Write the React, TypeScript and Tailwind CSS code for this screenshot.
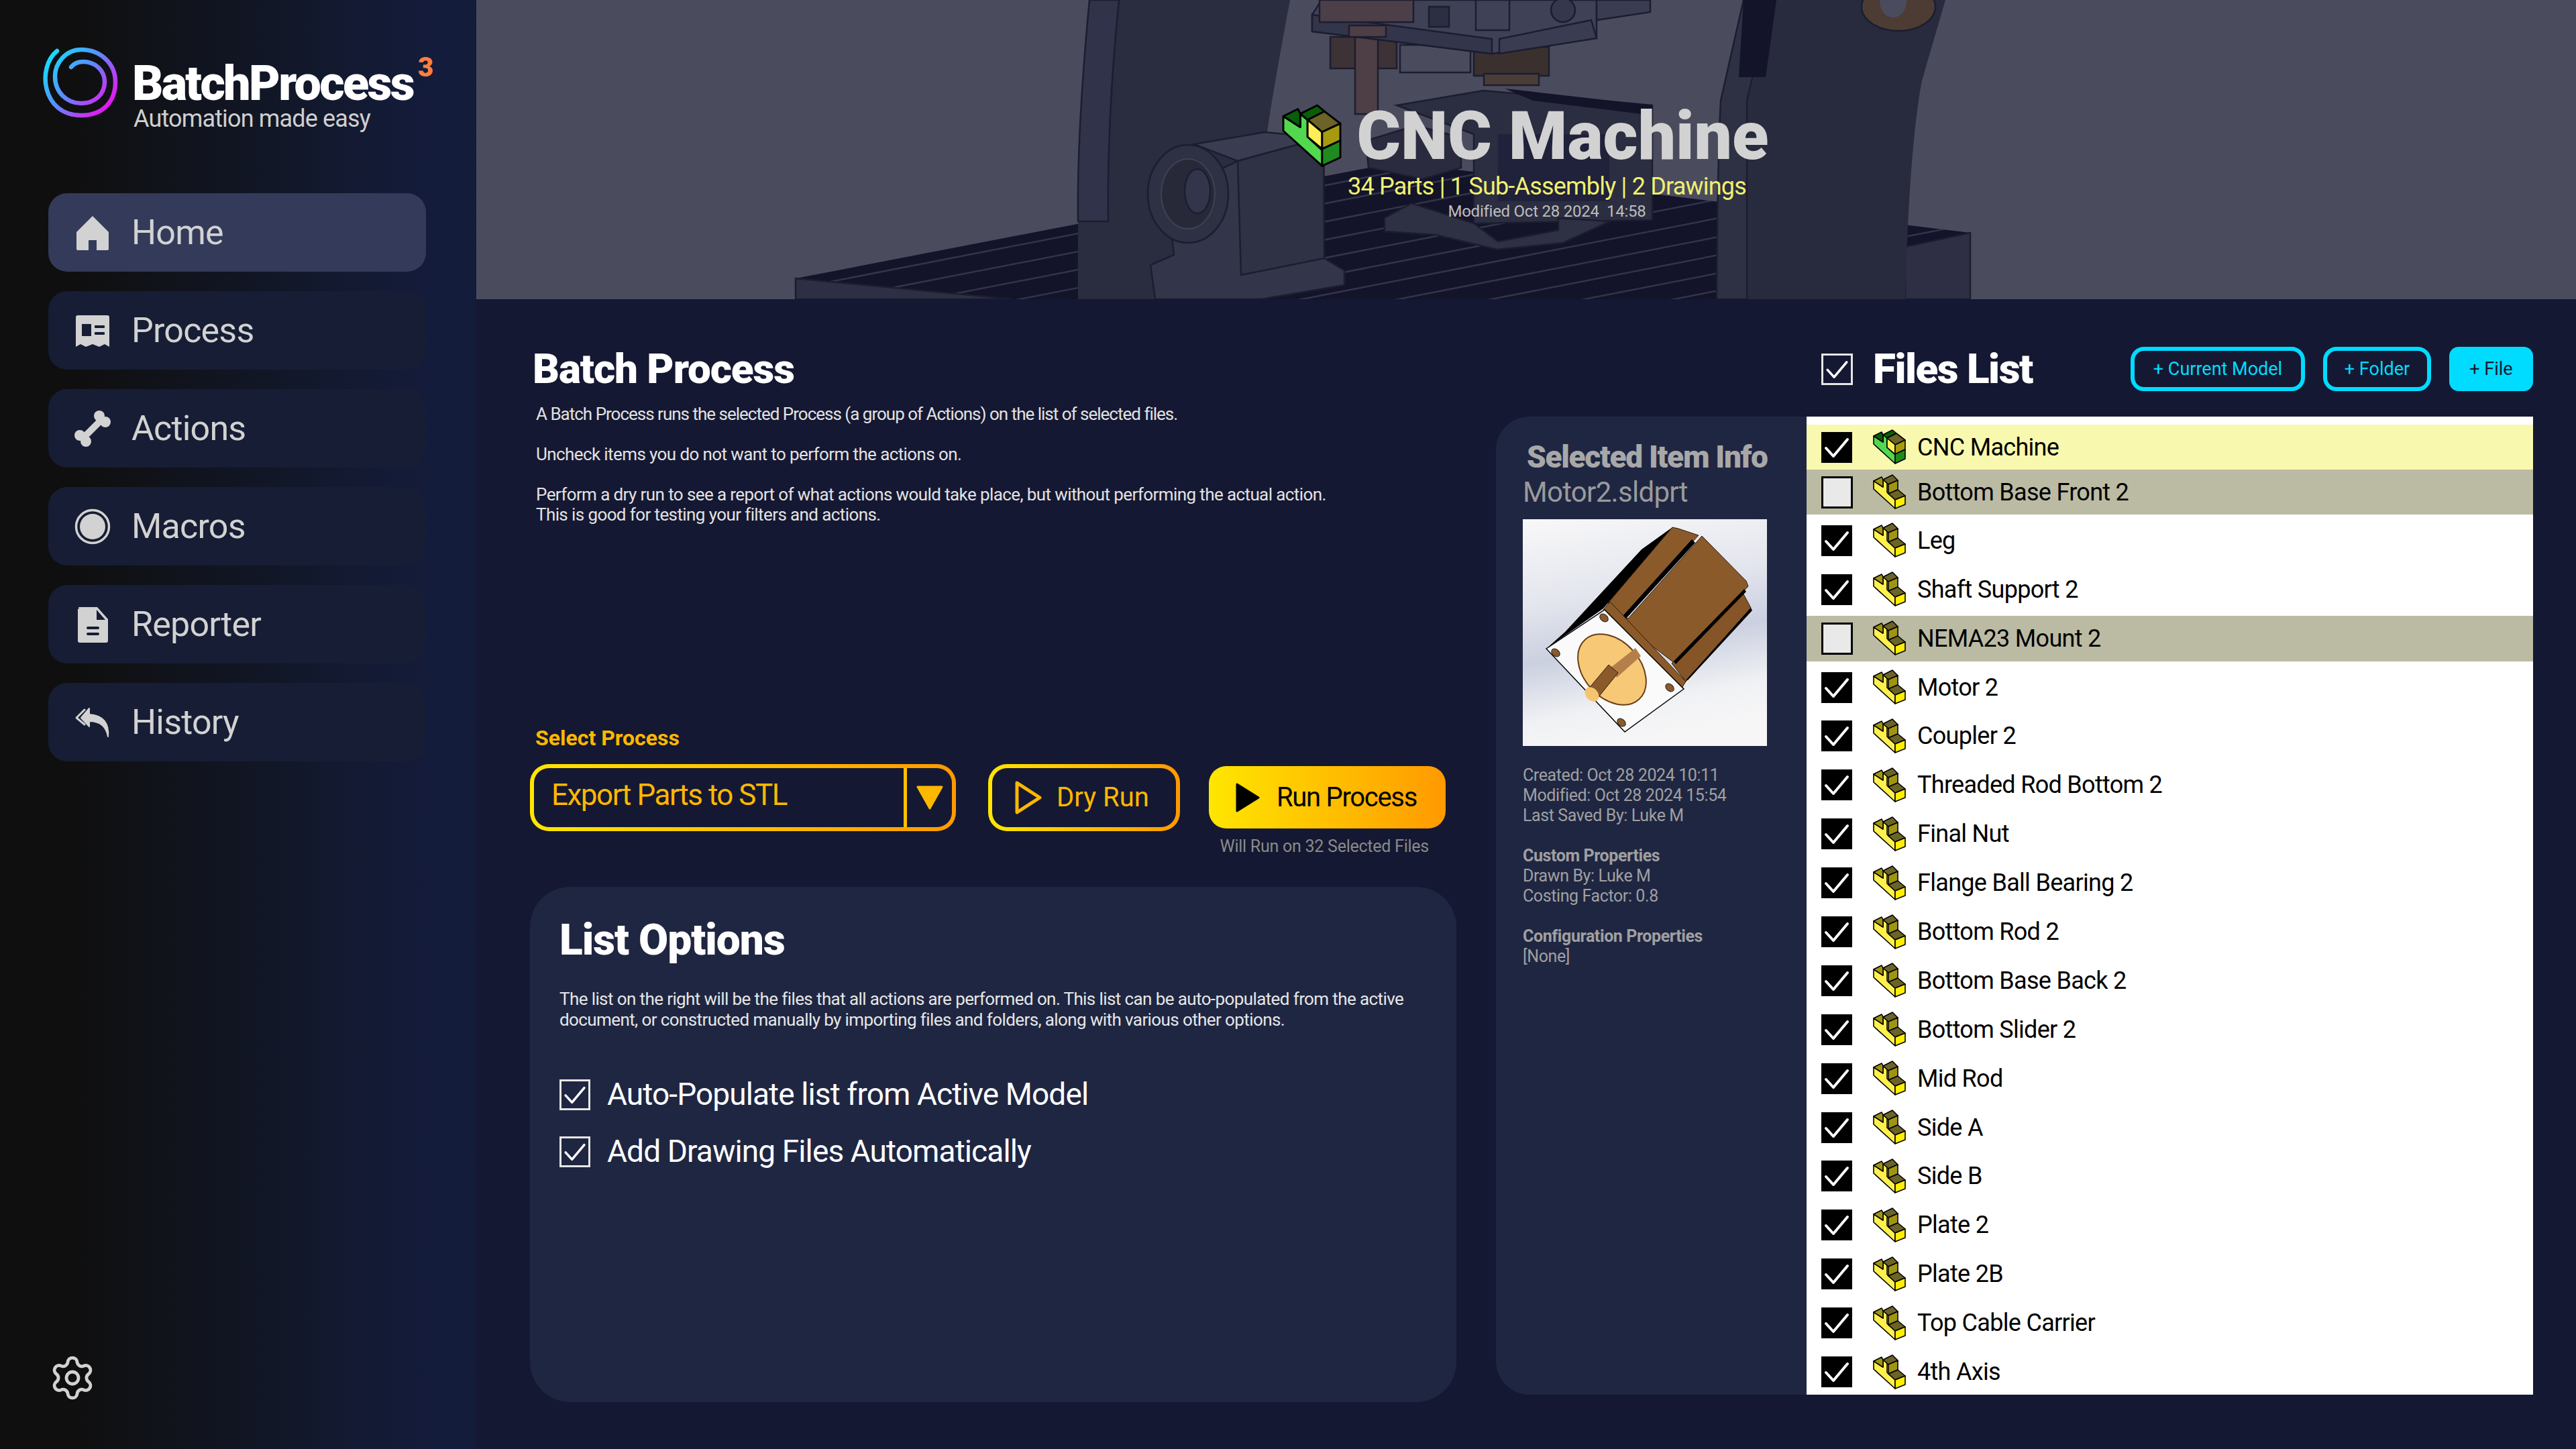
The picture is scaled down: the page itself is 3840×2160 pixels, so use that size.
import { Settings } from 'lucide-react';

const NAV = [
  { label: 'Home', icon: 'home', active: true },
  { label: 'Process', icon: 'process' },
  { label: 'Actions', icon: 'bone' },
  { label: 'Macros', icon: 'macro' },
  { label: 'Reporter', icon: 'file' },
  { label: 'History', icon: 'reply' },
];

const FILES = [
  { name: 'Bottom Base Front 2', off: true },
  { name: 'Leg' },
  { name: 'Shaft Support 2' },
  { name: 'NEMA23 Mount 2', off: true },
  { name: 'Motor 2' },
  { name: 'Coupler 2' },
  { name: 'Threaded Rod Bottom 2' },
  { name: 'Final Nut' },
  { name: 'Flange Ball Bearing 2' },
  { name: 'Bottom Rod 2' },
  { name: 'Bottom Base Back 2' },
  { name: 'Bottom Slider 2' },
  { name: 'Mid Rod' },
  { name: 'Side A' },
  { name: 'Side B' },
  { name: 'Plate 2' },
  { name: 'Plate 2B' },
  { name: 'Top Cable Carrier' },
  { name: '4th Axis' },
];

// rail grooves, as y at the left end of the rail
const GROOVES = [430, 457, 484, 511, 538, 565, 593, 621, 648, 675, 701, 728];

function NavIcon({ name }: { name: string }) {
  if (name === 'home') {
    return (
      <svg width="56" height="56" viewBox="0 0 56 56" fill="#d2d2d2">
        <path d="M28 3 L52 27 V52 Q52 54 50 54 H34 V39 H22 V54 H6 Q4 54 4 52 V27 Z" />
      </svg>
    );
  }
  if (name === 'process') {
    return (
      <svg width="56" height="56" viewBox="0 0 56 56">
        <path d="M3 8 Q3 5 6 5 H50 Q53 5 53 8 V52 L46 48 L38 52 L28 48 L18 52 L10 48 L3 52 Z" fill="#d2d2d2" />
        <rect x="12" y="18" width="14" height="18" fill="#171d35" />
        <rect x="31" y="20" width="15" height="4" rx="1" fill="#171d35" />
        <rect x="31" y="30" width="15" height="4" rx="1" fill="#171d35" />
      </svg>
    );
  }
  if (name === 'bone') {
    return (
      <svg width="56" height="56" viewBox="0 0 56 56" fill="#d2d2d2">
        <circle cx="38" cy="9" r="8" />
        <circle cx="47" cy="18" r="8" />
        <circle cx="9" cy="38" r="8" />
        <circle cx="18" cy="47" r="8" />
        <path d="M36 13 L43 20 L20 43 L13 36 Z" />
      </svg>
    );
  }
  if (name === 'macro') {
    return (
      <svg width="56" height="56" viewBox="0 0 56 56">
        <circle cx="28" cy="28" r="24.5" fill="none" stroke="#d2d2d2" strokeWidth="3.5" />
        <circle cx="28" cy="28" r="19" fill="#d2d2d2" />
      </svg>
    );
  }
  if (name === 'file') {
    return (
      <svg width="56" height="56" viewBox="0 0 56 56">
        <path d="M8 4 Q6 2 8 2 H35 L51 20 V52 Q51 55 48 55 H9 Q6 55 6 52 V5 Z" fill="#d2d2d2" />
        <path d="M34 6 L47 21 H34 Z" fill="#171d35" />
        <rect x="19" y="31" width="19" height="4" rx="2" fill="#171d35" />
        <rect x="19" y="40" width="19" height="4" rx="2" fill="#171d35" />
      </svg>
    );
  }
  return (
    <svg width="56" height="56" viewBox="0 0 56 56" fill="none" stroke="#d2d2d2">
      <path d="M16 9 L4 21 L16 31" strokeWidth="3" strokeLinecap="round" strokeLinejoin="round" />
      <path d="M23 7 L11 21 L23 34 V26 C38 26 48 32 51 49 C53 30 44 17 23 16 Z" fill="#d2d2d2" strokeWidth="2" strokeLinejoin="round" />
    </svg>
  );
}

function PartIcon({ assembly, size = 47 }: { assembly?: boolean; size?: number }) {
  const stroke = { stroke: '#000', strokeWidth: 1.6, strokeLinejoin: 'round' as const };
  if (assembly) {
    return (
      <svg width={size} height={(size * 51) / 47} viewBox="0 0 47 51" className="shrink-0 overflow-visible">
        <polygon points="0,9 0,21 32,50 32,37 20,26 20,12 14,7 14,18" fill="#52d84f" {...stroke} />
        <polygon points="0,9 12,3 14,7 14,18" fill="#0a5d0a" {...stroke} />
        <polygon points="14,7 28,0 34,5 20,12" fill="#0a5d0a" {...stroke} />
        <polygon points="20,12 34,5 47,15 32,22" fill="#6b6327" {...stroke} />
        <polygon points="20,12 32,22 32,36 20,26" fill="#ffee55" {...stroke} />
        <polygon points="32,22 47,15 47,29 32,36" fill="#a69a10" {...stroke} />
        <polygon points="32,36 47,29 47,43 32,50" fill="#1f8a1f" {...stroke} />
      </svg>
    );
  }
  return (
    <svg width={size} height={(size * 51) / 47} viewBox="0 0 47 51" className="shrink-0 overflow-visible">
      <polygon points="0,9 0,21 32,50 32,37 20,26 20,12 14,7 14,18" fill="#fff04d" {...stroke} />
      <polygon points="0,9 12,3 14,7 14,18" fill="#a09510" {...stroke} />
      <polygon points="14,7 28,0 36,8 22,14" fill="#6b6327" {...stroke} />
      <polygon points="22,14 36,8 36,22 22,28" fill="#a09510" {...stroke} />
      <polygon points="22,28 36,22 47,31 32,37" fill="#6b6327" {...stroke} />
      <polygon points="32,37 47,31 47,44 32,50" fill="#ffee00" {...stroke} />
    </svg>
  );
}

function Check({ size = 46, light }: { size?: number; light?: boolean }) {
  return (
    <svg viewBox="0 0 46 46" width={size} height={size} className={light ? 'border-[3px] border-[#e6e6e6] shrink-0' : 'shrink-0 bg-black'}>
      <path d="M7 24 L18 36 L39 11" fill="none" stroke="#fff" strokeWidth="4" strokeLinecap="round" strokeLinejoin="round" />
    </svg>
  );
}

function CncBackdrop() {
  const edge = { stroke: '#1c1d30', strokeWidth: 2.5 };
  return (
    <svg viewBox="710 0 3130 446" className="absolute inset-0 h-full w-full">
      <defs>
        <clipPath id="railTop">
          <polygon points="1186,415 2082,242 2937,347 2000,600" />
        </clipPath>
      </defs>
      <rect x="710" width="3130" height="446" fill="#4a4c5e" />

      {/* rail */}
      <polygon points="1186,415 2082,242 2937,347 2000,600" fill="#13132a" />
      <g clipPath="url(#railTop)" stroke="#33344a" strokeWidth="2.5">
        {GROOVES.map((y) => (
          <line key={y} x1="1186" y1={y} x2="2937" y2={y - 341} />
        ))}
      </g>
      <polygon points="1186,415 1186,446 1510,446" fill="#2e2f44" {...edge} />
      <polygon points="2937,347 2937,446 2840,446 2840,368" fill="#2e2f44" {...edge} />

      {/* left column */}
      <path d="M1624 0 H1923 Q1895 150 1889 197 L1870 446 H1607 Q1605 200 1624 0 Z" fill="#2a2c3f" />
      <path d="M1624 0 H1668 Q1650 180 1652 330 L1607 330 Q1605 200 1624 0 Z" fill="#31334a" {...edge} />

      {/* pillow block */}
      <polygon points="1845,240 1973,205 1974,385 2004,403 2004,425 1880,446 1722,446 1715,395 1750,380 1740,290" fill="#33354a" {...edge} />
      <polygon points="1780,215 1885,197 1973,205 1845,240" fill="#3a3c52" {...edge} />
      <polygon points="1845,240 1973,205 1974,385 1850,410" fill="#2f3145" {...edge} />
      <ellipse cx="1771" cy="289" rx="60" ry="73" fill="#2e3044" {...edge} />
      <ellipse cx="1771" cy="289" rx="40" ry="52" fill="#272939" stroke="#3f4155" strokeWidth="2" />
      <ellipse cx="1785" cy="285" rx="19" ry="33" fill="#33354a" {...edge} />

      {/* spindle and carriage */}
      <rect x="1983" y="55" width="99" height="47" fill="#3d3236" {...edge} />
      <rect x="2020" y="55" width="34" height="115" fill="#4d3f45" {...edge} />
      <rect x="2087" y="67" width="105" height="41" fill="#4a4c5e" {...edge} />
      <rect x="2197" y="70" width="112" height="43" fill="#3a302e" {...edge} />
      <rect x="2212" y="110" width="82" height="17" fill="#4a3d38" {...edge} />
      <polygon points="1956,22 1970,0 2380,0 2380,57 2224,80 1956,47" fill="#3f4156" {...edge} />
      <polygon points="1956,22 2224,58 2224,80 1956,47" fill="#33354a" {...edge} />
      <polygon points="2235,58 2372,30 2380,57 2235,80" fill="#3a3c52" {...edge} />
      <rect x="1967" y="0" width="140" height="33" fill="#4d3f48" {...edge} />
      <rect x="2011" y="38" width="55" height="17" fill="#4d3f45" {...edge} />
      <rect x="2200" y="0" width="50" height="45" fill="#3f4156" {...edge} />
      <polygon points="2380,0 2460,0 2460,18 2380,30" fill="#3a3c52" {...edge} />
      <circle cx="2330" cy="15" r="18" fill="#35374c" {...edge} />
      <rect x="2130" y="10" width="30" height="30" fill="#2c2e42" {...edge} />

      {/* stepper under title */}
      <polygon points="2082,157 2211,135 2463,157 2463,328 2197,333 2197,200" fill="#2b2d41" {...edge} />
      <polygon points="2243,132 2463,157 2463,172 2285,150" fill="#13132a" />
      <polygon points="2233,200 2399,200 2399,300 2233,300" fill="#20213a" />
      <polygon points="2036,210 2110,187 2178,205 2178,250 2120,267 2040,250" fill="#2a2b3e" {...edge} />
      <polygon points="2064,325 2104,303 2197,333 2233,360 2323,343 2323,325 2400,330 2330,362 2232,372 2140,350 2064,345" fill="#2e3044" {...edge} />

      {/* right column */}
      <path d="M2599 0 H2900 L2865 120 Q2846 220 2840 446 H2559 Q2560 250 2565 150 Z" fill="#282a3e" />
      <path d="M2599 0 H2640 L2604 150 V446 H2559 Q2560 250 2565 150 Z" fill="#2e3044" {...edge} />
      <polygon points="2599,0 2648,0 2632,115 2592,115" fill="#13132a" />
      <ellipse cx="2830" cy="10" rx="55" ry="36" fill="#4d3c33" {...edge} />
      <ellipse cx="2822" cy="2" rx="20" ry="24" fill="#4a4c5e" />
    </svg>
  );
}

function MotorPicture() {
  return (
    <svg viewBox="0 0 364 338" className="h-[338px] w-[364px]">
      <defs>
        <linearGradient id="motorBg" x1="0.1" y1="0" x2="0.3" y2="1">
          <stop offset="0" stopColor="#f7f7f8" />
          <stop offset="0.35" stopColor="#e4e6ee" />
          <stop offset="0.6" stopColor="#cbd0e0" />
          <stop offset="0.85" stopColor="#f0f1f4" />
          <stop offset="1" stopColor="#f6f6f7" />
        </linearGradient>
      </defs>
      <rect width="364" height="338" fill="url(#motorBg)" />
      {/* shadowed side */}
      <polygon points="35,193 63,168 177,45 223,12 127,125 120,133" fill="#000" />
      {/* upper fin */}
      <polygon points="127,125 223,12 232,14 262,24 150,146" fill="#8b5a2b" stroke="#2b1a08" strokeWidth="1" />
      {/* main face */}
      <polygon points="157,148 267,25 333,92 336,100 227,215 240,225 122,135" fill="#8b5a2b" stroke="#2b1a08" strokeWidth="1" />
      <polygon points="150,143 252,30 257,35 154,148" fill="#000" />
      {/* lower fin */}
      <polygon points="222,215 327,108 340,132 243,242" fill="#855527" stroke="#2b1a08" strokeWidth="1" />
      <polygon points="225,212 330,104 333,108 228,216" fill="#000" />
      <polygon points="243,240 340,132 342,136 246,240" fill="#000" />
      {/* collar */}
      <polygon points="120,135 130,123 243,242 233,258" fill="#8b5a2b" stroke="#2b1a08" strokeWidth="1" />
      {/* face plate */}
      <polygon points="35,193 122,135 240,253 152,317" fill="#fafafa" stroke="#000" strokeWidth="1.5" />
      <ellipse cx="133" cy="224" rx="60" ry="42" transform="rotate(48 133 224)" fill="#f7c876" stroke="#6b3f17" strokeWidth="2" />
      <polygon points="130,222 168,192 176,204 140,236" fill="#b67f4a" />
      <polygon points="96,255 128,217 142,229 112,266" fill="#8b5a2b" stroke="#2b1a08" strokeWidth="1" />
      <ellipse cx="103" cy="261" rx="12" ry="9" transform="rotate(48 103 261)" fill="#f5c46e" />
      {[[121, 147], [49, 199], [219, 251], [147, 303]].map(([cx, cy]) => (
        <ellipse key={cx} cx={cx} cy={cy} rx="7" ry="5" transform={`rotate(40 ${cx} ${cy})`} fill="#8b5a2b" stroke="#222" strokeWidth="1" />
      ))}
    </svg>
  );
}

export default function App() {
  return (
    <div className="flex h-[2160px] w-[3840px] overflow-hidden bg-[#151832] font-[Roboto,sans-serif]">
      <aside className="flex w-[710px] shrink-0 flex-col bg-gradient-to-r from-[#0f0f0f] from-15% to-[#141c3b] to-90% pb-[70px] pl-[72px] pr-[75px] pt-[69px]">
        <div className="relative flex h-[130px]">
          <svg width="116" height="110" viewBox="62 69 116 110" className="-ml-[10px] shrink-0">
            <defs>
              <linearGradient id="swirl" x1="0" y1="0.1" x2="1" y2="0.9">
                <stop offset="0" stopColor="#10e4ff" />
                <stop offset="0.45" stopColor="#5c8cff" />
                <stop offset="1" stopColor="#ff00ee" />
              </linearGradient>
            </defs>
            <path
              d="M85 76 C55 100 62 172 121 172 C155 172 172 150 172 122 C172 95 150 74 121 74 C98 74 82 94 82 114 C82 138 100 154 121 154 C142 154 156 140 156 122 C156 105 142 92 124 92 C116 92 110 95 106 100"
              fill="none"
              stroke="url(#swirl)"
              strokeWidth="6.5"
              strokeLinecap="round"
            />
          </svg>
          <div className="ml-[19px] flex flex-col pt-[21px]">
            <div className="whitespace-nowrap text-[72px] font-black leading-[70px] tracking-[-2.7px] text-white">BatchProcess</div>
            <div className="ml-[2px] whitespace-nowrap text-[36px] leading-[34px] tracking-[-0.85px] text-[#cfcfcf]">Automation made easy</div>
          </div>
          <span className="absolute left-[551px] top-[10px] text-[40px] font-black leading-[44px] text-[#ff7f3f]">3</span>
        </div>

        <nav className="mt-[89px] flex flex-col gap-[29px]">
          {NAV.map((item) => (
            <div
              key={item.label}
              className={`flex h-[117px] items-center gap-[30px] rounded-[28px] pl-[38px] ${item.active ? 'bg-[#333a5a]' : 'bg-[#161d34]'}`}
            >
              <NavIcon name={item.icon} />
              <span className="text-[52px] leading-none tracking-[-0.8px] text-[#d2d2d2]">{item.label}</span>
            </div>
          ))}
        </nav>

        <Settings className="mt-auto h-[72px] w-[72px] text-[#d2d2d2]" strokeWidth={1.6} />
      </aside>

      <div className="flex min-w-0 flex-1 flex-col">
        <header className="relative h-[446px] shrink-0 overflow-hidden">
          <CncBackdrop />
          <div className="relative flex h-full flex-col items-center pt-[153px]">
            <div className="flex items-center gap-[24px]">
              <PartIcon assembly size={85} />
              <h1 className="whitespace-nowrap text-[100px] font-black leading-[100px] text-[#d2d2d2]">CNC Machine</h1>
            </div>
            <p className="ml-[62px] mt-[1px] whitespace-nowrap text-[36px] leading-[48px] tracking-[-0.8px] text-[#f0f070]">34 Parts | 1 Sub-Assembly | 2 Drawings</p>
            <p className="ml-[62px] -mt-[2px] whitespace-nowrap text-[24px] leading-[30px] tracking-[-0.25px] text-[#bdbdbd]">Modified Oct 28 2024&nbsp; 14:58</p>
          </div>
        </header>

        <main className="flex flex-1 gap-[59px] pl-[80px] pr-[64px] pt-[71px]">
          <section className="flex w-[1381px] flex-col">
            <h2 className="ml-[4px] h-[66px] text-[62px] font-black leading-[66px] tracking-[-1.1px] text-white">Batch Process</h2>
            <div className="ml-[9px] mt-[19px] text-[26px] leading-[30px] tracking-[-0.6px] text-[#e2e2e2]">
              <p className="mb-[30px] tracking-[-1px]">A Batch Process runs the selected Process (a group of Actions) on the list of selected files.</p>
              <p className="mb-[30px]">Uncheck items you do not want to perform the actions on.</p>
              <p>Perform a dry run to see a report of what actions would take place, but without performing the actual action.</p>
              <p>This is good for testing your filters and actions.</p>
            </div>

            <div className="ml-[8px] mt-[298px] text-[32px] font-bold leading-[40px] text-[#ffb800]">Select Process</div>
            <div className="mt-[19px] flex items-start">
              <div className="h-[100px] w-[635px] rounded-[28px] bg-gradient-to-r from-[#ffe600] to-[#ff9900] p-[6px]">
                <div className="flex h-full rounded-[22px] bg-[#151832]">
                  <span className="flex-1 pl-[26px] text-[44px] leading-[80px] tracking-[-1.5px] text-[#ffb800]">Export Parts to STL</span>
                  <div className="flex w-[72px] items-center justify-center border-l-[5px] border-[#ffbf00]">
                    <svg width="40" height="36" viewBox="0 0 40 36">
                      <path d="M2 2 H38 L20 34 Z" fill="#ffb800" stroke="#ffb800" strokeWidth="3" strokeLinejoin="round" />
                    </svg>
                  </div>
                </div>
              </div>
              <div className="ml-[48px] h-[100px] w-[286px] rounded-[28px] bg-gradient-to-r from-[#ffe600] to-[#ff9900] p-[6px]">
                <div className="flex h-full items-center gap-[22px] rounded-[22px] bg-[#151832] pl-[34px]">
                  <svg width="40" height="50" viewBox="0 0 40 50">
                    <path d="M3 3 L37 25 L3 47 Z" fill="none" stroke="#ffb800" strokeWidth="5" strokeLinejoin="round" />
                  </svg>
                  <span className="text-[40px] leading-none text-[#ffb800]">Dry Run</span>
                </div>
              </div>
              <div className="ml-[43px] mt-[3px] flex h-[93px] w-[353px] items-center gap-[25px] rounded-[26px] bg-gradient-to-r from-[#ffe600] to-[#ff9900] pl-[40px]">
                <svg width="36" height="44" viewBox="0 0 36 44">
                  <path d="M2 2 L34 22 L2 42 Z" fill="#000" stroke="#000" strokeWidth="3" strokeLinejoin="round" />
                </svg>
                <span className="text-[40px] leading-none tracking-[-1.3px] text-black">Run Process</span>
              </div>
            </div>
            <div className="mt-[8px] pr-[41px] text-right text-[25px] leading-[30px] tracking-[-0.25px] text-[#8a8a8a]">Will Run on 32 Selected Files</div>

            <div className="mt-[45px] h-[768px] rounded-[60px] bg-[#1f2642] px-[44px] pt-[42px]">
              <h2 className="text-[64px] font-black leading-[76px] tracking-[-1px] text-white">List Options</h2>
              <p className="mt-[34px] whitespace-nowrap text-[26px] leading-[31px] tracking-[-0.6px] text-[#e6e6e6]">
                The list on the right will be the files that all actions are performed on. This list can be auto-populated from the active
                <br />
                document, or constructed manually by importing files and folders, along with various other options.
              </p>
              <div className="mt-[72px] flex flex-col gap-[38px] text-[46px] leading-[47px] tracking-[-0.9px] text-white">
                <label className="flex items-center gap-[25px]">
                  <Check light />
                  Auto-Populate list from Active Model
                </label>
                <label className="flex items-center gap-[25px]">
                  <Check light />
                  Add Drawing Files Automatically
                </label>
              </div>
            </div>
          </section>

          <section className="flex min-w-0 flex-1 flex-col">
            <div className="flex h-[66px] items-center pl-[485px]">
              <Check light size={47} />
              <h2 className="ml-[30px] whitespace-nowrap text-[62px] font-black leading-none tracking-[-1.5px] text-white">Files List</h2>
              <div className="ml-auto flex gap-[27px] text-[27px] leading-none text-[#00dcff]">
                <button className="flex h-[66px] w-[260px] items-center justify-center rounded-[20px] border-[6px] border-[#00dcff]">+ Current Model</button>
                <button className="flex h-[66px] w-[161px] items-center justify-center rounded-[20px] border-[6px] border-[#00dcff]">+ Folder</button>
                <button className="flex h-[66px] w-[125px] items-center justify-center rounded-[14px] bg-[#00dcff] text-[#151832]">+ File</button>
              </div>
            </div>

            <div className="mt-[38px] flex h-[1458px]">
              <div className="w-[463px] shrink-0 rounded-l-[50px] bg-[#1f2642] pl-[40px] pt-[32px]">
                <h3 className="ml-[6px] whitespace-nowrap text-[46px] font-black leading-[56px] tracking-[-1.3px] text-[#a8a8a8]">Selected Item Info</h3>
                <p className="text-[42px] leading-[50px] tracking-[-0.7px] text-[#9a9a9a]">Motor2.sldprt</p>
                <div className="mt-[15px]"><MotorPicture /></div>
                <div className="mt-[29px] text-[25px] leading-[30px] tracking-[-0.4px] text-[#a0a0a0]">
                  <p>Created: Oct 28 2024 10:11</p>
                  <p>Modified: Oct 28 2024 15:54</p>
                  <p>Last Saved By: Luke M</p>
                  <p className="mt-[30px] font-bold">Custom Properties</p>
                  <p>Drawn By: Luke M</p>
                  <p>Costing Factor: 0.8</p>
                  <p className="mt-[30px] font-bold">Configuration Properties</p>
                  <p>[None]</p>
                </div>
              </div>

              <div className="min-w-0 flex-1 overflow-hidden bg-white pt-[12px] text-[36px] tracking-[-0.7px] text-black">
                <div className="flex h-[67px] items-center bg-[#f8f9ae] pl-[22px]">
                  <Check />
                  <span className="ml-[32px]"><PartIcon assembly /></span>
                  <span className="ml-[18px]">CNC Machine</span>
                </div>
                {FILES.map((file, i) => (
                  <div
                    key={file.name}
                    className={`flex items-center pl-[22px] ${i === 0 ? 'h-[67px]' : 'mt-[4.9px] h-[68px]'} ${file.off ? 'bg-[#bbbba4]' : ''}`}
                  >
                    {file.off ? <div className="h-[48px] w-[47px] shrink-0 border-[3px] border-black bg-[#e9e9e9]" /> : <Check />}
                    <span className={file.off ? 'ml-[31px]' : 'ml-[32px]'}><PartIcon /></span>
                    <span className="ml-[18px]">{file.name}</span>
                  </div>
                ))}
              </div>
            </div>
          </section>
        </main>
      </div>
    </div>
  );
}
